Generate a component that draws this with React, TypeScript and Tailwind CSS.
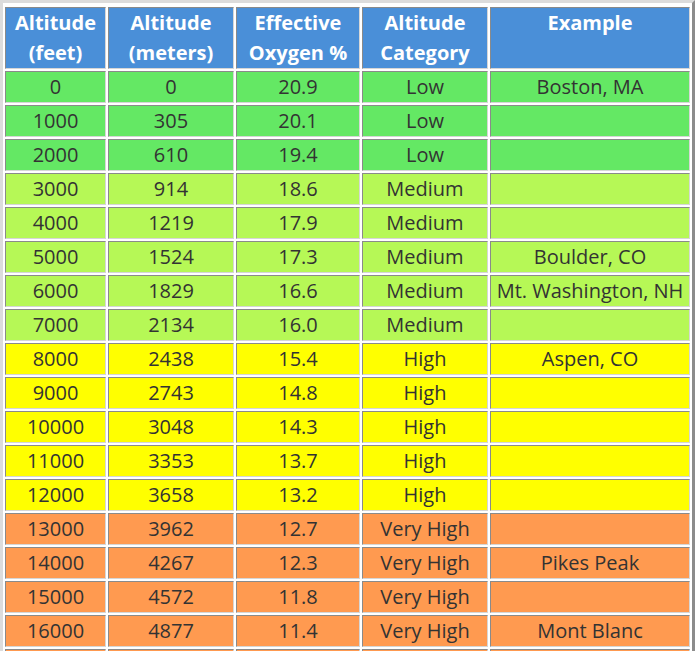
const rows = [
  { ft: "0", m: "0", o2: "20.9", cat: "Low", ex: "Boston, MA" },
  { ft: "1000", m: "305", o2: "20.1", cat: "Low", ex: "" },
  { ft: "2000", m: "610", o2: "19.4", cat: "Low", ex: "" },
  { ft: "3000", m: "914", o2: "18.6", cat: "Medium", ex: "" },
  { ft: "4000", m: "1219", o2: "17.9", cat: "Medium", ex: "" },
  { ft: "5000", m: "1524", o2: "17.3", cat: "Medium", ex: "Boulder, CO" },
  { ft: "6000", m: "1829", o2: "16.6", cat: "Medium", ex: "Mt. Washington, NH" },
  { ft: "7000", m: "2134", o2: "16.0", cat: "Medium", ex: "" },
  { ft: "8000", m: "2438", o2: "15.4", cat: "High", ex: "Aspen, CO" },
  { ft: "9000", m: "2743", o2: "14.8", cat: "High", ex: "" },
  { ft: "10000", m: "3048", o2: "14.3", cat: "High", ex: "" },
  { ft: "11000", m: "3353", o2: "13.7", cat: "High", ex: "" },
  { ft: "12000", m: "3658", o2: "13.2", cat: "High", ex: "" },
  { ft: "13000", m: "3962", o2: "12.7", cat: "Very High", ex: "" },
  { ft: "14000", m: "4267", o2: "12.3", cat: "Very High", ex: "Pikes Peak" },
  { ft: "15000", m: "4572", o2: "11.8", cat: "Very High", ex: "" },
  { ft: "16000", m: "4877", o2: "11.4", cat: "Very High", ex: "Mont Blanc" },
  { ft: "17000", m: "5182", o2: "11.0", cat: "Very High", ex: "" },
  { ft: "18000", m: "5486", o2: "10.5", cat: "Very High", ex: "" },
];

const rowBg: Record<string, string> = {
  Low: "bg-[#64e864]",
  Medium: "bg-[#b6f856]",
  High: "bg-[#ffff00]",
  "Very High": "bg-[#ff9a50]",
};

const headers = [
  ["Altitude", "(feet)"],
  ["Altitude", "(meters)"],
  ["Effective", "Oxygen %"],
  ["Altitude", "Category"],
  ["Example", ""],
];

const colWidths = ["w-[101px]", "w-[126px]", "w-[124px]", "w-[126px]", "w-[200px]"];

const cell =
  "border border-t-[#8a8a8a] border-l-[#8a8a8a] border-r-[#d6d6d6] border-b-[#d6d6d6] p-0 text-center";

export default function App() {
  return (
    <div className="bg-white font-['Open_Sans',sans-serif]">
      <table className="table-fixed w-[695px] pt-[2px] border-separate border-spacing-[2px] border-[3px] border-t-[#dcdcdc] border-l-[#dcdcdc] border-r-[#8c8c8c] border-b-[#8c8c8c]">
        <colgroup>
          {colWidths.map((w, i) => (
            <col key={i} className={w} />
          ))}
        </colgroup>
        <thead>
          <tr>
            {headers.map((h, i) => (
              <th
                key={i}
                className={`${cell} bg-[#4a8fd8] text-white font-bold text-[20px] leading-[30px] align-top`}
              >
                {h[0]}
                <br />
                {h[1] || "\u00a0"}
              </th>
            ))}
          </tr>
        </thead>
        <tbody>
          {rows.map((r) => (
            <tr key={r.ft} className={rowBg[r.cat]}>
              {[r.ft, r.m, r.o2, r.cat, r.ex].map((v, i) => (
                <td
                  key={i}
                  className={`${cell} text-[#333333] text-[20px] leading-[30px] whitespace-nowrap`}
                >
                  {v || "\u00a0"}
                </td>
              ))}
            </tr>
          ))}
        </tbody>
      </table>
    </div>
  );
}
